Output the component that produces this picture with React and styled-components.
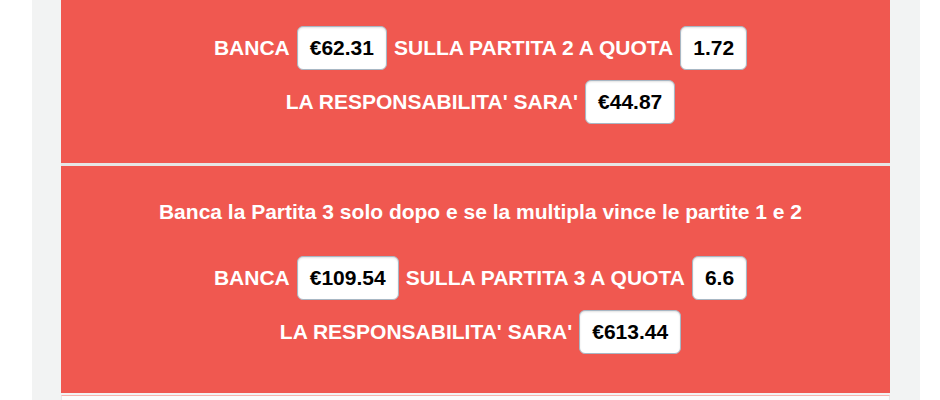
import React from "react";
import styled, { createGlobalStyle } from "styled-components";

const Global = createGlobalStyle`
  html, body { margin: 0; padding: 0; background: #ffffff; }
  body { font-family: "Liberation Sans", Arial, Helvetica, sans-serif; }
`;

const Page = styled.div`
  padding: 0 20px 0 32px;
  height: 400px;
  overflow: hidden;
`;

const Column = styled.div`
  background: #f2f3f3;
  padding: 0 30px 0 29px;
  height: 100%;
`;

const Panel = styled.section`
  background: #f05850;
  color: #ffffff;
  padding: ${(p) => (p.$first ? "26px" : "34px")} 0 39px 10px;
  display: flex;
  flex-direction: column;
  align-items: center;
`;

const Separator = styled.div`
  height: 3px;
  background: #e6e6e6;
`;

const Heading = styled.p`
  margin: 0 0 32px;
  font-size: 21px;
  line-height: 24px;
  font-weight: 700;
`;

const Rows = styled.div`
  display: flex;
  flex-direction: column;
  gap: 10px;
  align-items: center;
`;

const Row = styled.div`
  display: flex;
  align-items: center;
  justify-content: center;
  gap: 7px;
`;

const Label = styled.span`
  font-size: 21px;
  line-height: 24px;
  font-weight: 700;
  text-transform: uppercase;
  white-space: nowrap;
`;

const Value = styled.span`
  display: inline-block;
  background: #ffffff;
  color: #000000;
  font-size: 21px;
  line-height: 24px;
  font-weight: 700;
  padding: 9px 12px;
  border: 1px solid #a8b7c4;
  border-radius: 6px;
  box-shadow: inset 0 1px 2px rgba(0, 0, 0, 0.12);
  white-space: nowrap;
`;

const NextPanel = styled.div`
  margin-top: 2px;
  background: #fcfcfc;
  border: 1px solid #e8e8e8;
  border-top: 1px solid #f6b3ae;
  height: 120px;
`;

const bets = [
  { first: true, stake: "€62.31", match: 2, odds: "1.72", liability: "€44.87" },
  {
    heading: "Banca la Partita 3 solo dopo e se la multipla vince le partite 1 e 2",
    stake: "€109.54",
    match: 3,
    odds: "6.6",
    liability: "€613.44",
  },
];

function BetPanel({ bet }) {
  return (
    <Panel $first={bet.first}>
      {bet.heading && <Heading>{bet.heading}</Heading>}
      <Rows>
        <Row>
          <Label>Banca</Label>
          <Value>{bet.stake}</Value>
          <Label>{`Sulla partita ${bet.match} a quota`}</Label>
          <Value>{bet.odds}</Value>
        </Row>
        <Row>
          <Label>La responsabilita' sara'</Label>
          <Value>{bet.liability}</Value>
        </Row>
      </Rows>
    </Panel>
  );
}

export default function App() {
  return (
    <>
      <Global />
      <Page>
        <Column>
          <BetPanel bet={bets[0]} />
          <Separator />
          <BetPanel bet={bets[1]} />
          <NextPanel />
        </Column>
      </Page>
    </>
  );
}
